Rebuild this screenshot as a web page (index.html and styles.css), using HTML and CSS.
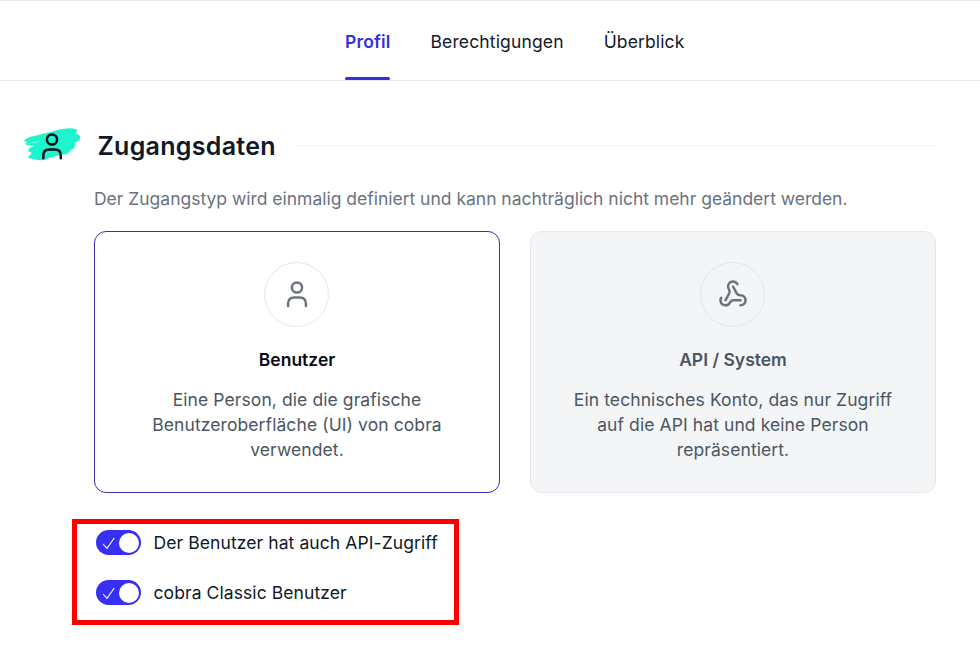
FILE: index.html
```html
<!DOCTYPE html>
<html lang="de">
<head>
<meta charset="utf-8">
<title>Profil</title>
<link rel="stylesheet" href="styles.css">
</head>
<body>
<nav class="tabs">
  <a class="tab active">Profil</a>
  <a class="tab">Berechtigungen</a>
  <a class="tab">Überblick</a>
</nav>
<main>
  <header class="section-head">
    <svg class="section-icon" viewBox="0 0 60 40" width="60" height="40">
      <path class="brush" d="M2 20Q3 17 12 15L32 10Q46 6 54 8Q56 9 54 12L58 15Q59 18 56 20L53 22Q54 27 49 29L45 33L38 34L27 37Q22 40 16 39L6 37Q7 34 10 32L6 30Q6 27 12 25L4 24Q3 22 5 21Z"/>
      <path class="streak" d="M6 23L18 20M45 33L51 30"/>
      <g class="person"><circle cx="30" cy="18.5" r="5.1"/><path d="M21.3 37.3V34.5Q21.3 28.4 27.3 28.4H32.8Q38.8 28.4 38.8 34.5V37.3"/></g>
    </svg>
    <h1>Zugangsdaten</h1>
    <div class="rule"></div>
  </header>
  <p class="hint">Der Zugangstyp wird einmalig definiert und kann nachträglich nicht mehr geändert werden.</p>
  <section class="cards">
    <article class="card selected">
      <div class="circle">
        <svg class="person" viewBox="0 0 30 30" width="30" height="30"><circle cx="15" cy="8.5" r="5.1"/><path d="M6.1 27V24.8Q6.1 18.5 12.1 18.5H17.9Q23.9 18.5 23.9 24.8V27"/></svg>
      </div>
      <h2>Benutzer</h2>
      <p>Eine Person, die die grafische<br>Benutzeroberfläche (UI) von cobra<br>verwendet.</p>
    </article>
    <article class="card disabled">
      <div class="circle">
        <svg class="hook" viewBox="0 0 24 24" width="30" height="30"><path d="M18 16.98h-5.99c-1.1 0-1.95.94-2.48 1.9A4 4 0 0 1 2 17c.01-.7.2-1.4.57-2"/><path d="m6 17 3.13-5.78c.53-.97.1-2.18-.5-3.1a4 4 0 1 1 6.89-4.06"/><path d="m12 6 3.13 5.73C15.66 12.7 16.9 13 18 13a4 4 0 0 1 0 8"/></svg>
      </div>
      <h2>API / System</h2>
      <p>Ein technisches Konto, das nur Zugriff<br>auf die API hat und keine Person<br>repräsentiert.</p>
    </article>
  </section>
  <section class="options">
    <label class="option"><span class="switch"><svg viewBox="0 0 14 14" width="14" height="14"><path d="M1 8L5 12.3L12.3 2"/></svg><span class="knob"></span></span>Der Benutzer hat auch API-Zugriff</label>
    <label class="option"><span class="switch"><svg viewBox="0 0 14 14" width="14" height="14"><path d="M1 8L5 12.3L12.3 2"/></svg><span class="knob"></span></span>cobra Classic Benutzer</label>
  </section>
</main>
</body>
</html>
```
FILE: styles.css
```css
* { box-sizing: border-box; }
body {
  margin: 0;
  background: #fff;
  color: #111827;
  font: 17.5px/25px Inter, "Liberation Sans", sans-serif;
  overflow: hidden;
}
h1, h2, p { margin: 0; }
svg { display: block; fill: none; flex: none; }

.tabs {
  display: flex;
  gap: 40px;
  height: 81px;
  padding-left: 345px;
  border-top: 1px solid #e5e7eb;
  border-bottom: 1px solid #e5e7eb;
}
.tab { height: 79px; padding-top: 28px; white-space: nowrap; letter-spacing: 0.14px; }
.tab.active {
  position: relative;
  width: 45.5px;
  color: #372fdc;
  font-weight: 600;
}
.tab.active::after {
  content: "";
  position: absolute;
  left: 0;
  bottom: 0;
  width: 45px;
  height: 3px;
  border-radius: 2px;
  background: #372fdc;
}

.section-head { display: flex; align-items: center; height: 40px; margin: 45px 44px 0 22px; }
.section-icon { margin-top: -11px; }
h1 { margin-left: 15.5px; font-size: 25px; line-height: 35px; font-weight: 600; letter-spacing: 0.29px; white-space: nowrap; }
.rule { flex: 1; height: 1px; margin: -2px 0 0 21px; background: #f3f4f6; }
.brush { fill: #1df5cf; }
.streak { stroke: #8afbe6; stroke-width: 0.7; }
.person { stroke: #6b7280; stroke-width: 2.5; stroke-linecap: round; }
.section-icon .person { stroke: #080d12; }

.hint { margin: 20px 0 0 94px; color: #6b7280; letter-spacing: -0.012px; white-space: nowrap; }
.cards { display: grid; grid-template-columns: 406px 406px; gap: 30px; margin: 20px 0 0 94px; }
.card {
  display: flex;
  flex-direction: column;
  align-items: center;
  height: 262px;
  padding-top: 30px;
  border: 1px solid #e5e7eb;
  border-radius: 12px;
  text-align: center;
  color: #4b5563;
}
.card.selected { border-color: #3d2fae; }
.card.disabled { background: #f3f5f6; }
.card p { letter-spacing: 0.09px; }
.circle {
  display: flex;
  align-items: center;
  justify-content: center;
  width: 65px;
  height: 65px;
  margin-right: 1px;
  padding: 0 0 2px 1px;
  border: 1px solid #e5e7eb;
  border-radius: 50%;
}
.hook { stroke: #6b7280; stroke-width: 2; stroke-linecap: round; stroke-linejoin: round; }
.card h2 { margin: 20px 0 15px; font-size: 17.5px; line-height: 25px; font-weight: 600; }
.selected h2 { color: #080b12; }

.options {
  display: flex;
  flex-direction: column;
  gap: 25px;
  width: 387px;
  height: 106px;
  margin: 26px 0 0 72px;
  padding: 6px 0 0 19px;
  border: 5px solid #f00;
}
.option { display: flex; align-items: center; gap: 12.5px; height: 25px; letter-spacing: 0.09px; white-space: nowrap; }
.switch {
  display: flex;
  align-items: center;
  justify-content: space-between;
  width: 45px;
  height: 25px;
  padding: 0 2px 0 6px;
  border-radius: 13px;
  background: #372ff4;
}
.switch path { stroke: #fff; stroke-width: 1.1; }
.knob { width: 20px; height: 20px; border-radius: 50%; background: #fff; }
```
